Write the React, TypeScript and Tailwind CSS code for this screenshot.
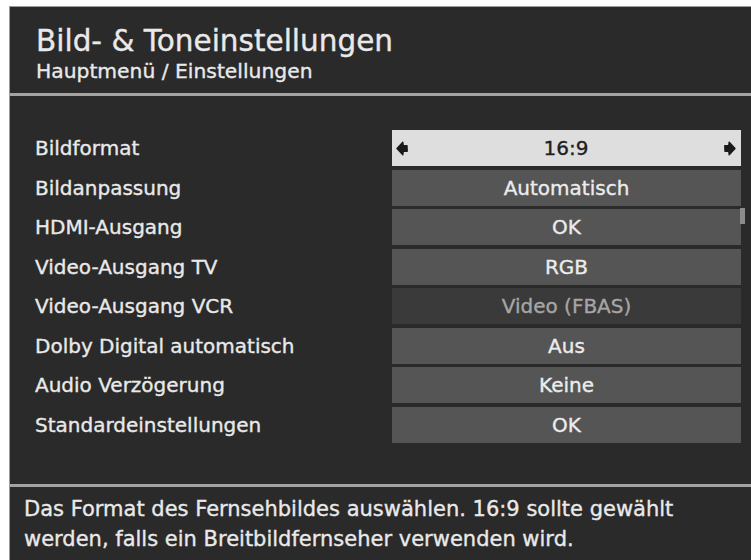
import React from "react";

const rows = [
  { label: "Bildformat", value: "16:9", state: "selected" },
  { label: "Bildanpassung", value: "Automatisch", state: "normal" },
  { label: "HDMI-Ausgang", value: "OK", state: "normal" },
  { label: "Video-Ausgang TV", value: "RGB", state: "normal" },
  { label: "Video-Ausgang VCR", value: "Video (FBAS)", state: "disabled" },
  { label: "Dolby Digital automatisch", value: "Aus", state: "normal" },
  { label: "Audio Verzögerung", value: "Keine", state: "normal" },
  { label: "Standardeinstellungen", value: "OK", state: "normal" },
];

function Arrow({ dir }: { dir: "left" | "right" }) {
  return (
    <svg
      width="12"
      height="15"
      viewBox="0 0 12 15"
      className={dir === "right" ? "rotate-180" : ""}
    >
      <path
        d="M1 7.5 L6.8 1.2 L7.2 4.6 L11 4.8 L11.2 10.2 L7.2 10.4 L6.8 13.8 Z"
        fill="#1a1a1a"
        stroke="#1a1a1a"
        strokeWidth="1.4"
        strokeLinejoin="round"
      />
    </svg>
  );
}

function ValueBox({ value, state }: { value: string; state: string }) {
  if (state === "selected") {
    return (
      <div className="flex h-[36px] items-center justify-between bg-[#dedede] pl-[4px] pr-[5px] text-[#1e1e1e]">
        <Arrow dir="left" />
        <span>{value}</span>
        <Arrow dir="right" />
      </div>
    );
  }
  const cls =
    state === "disabled"
      ? "bg-[#3a3a3a] text-[#a6a6a6]"
      : "bg-[#555555] text-[#ececec]";
  return (
    <div className={`flex h-[36px] items-center justify-center ${cls}`}>
      <span>{value}</span>
    </div>
  );
}

export default function App() {
  return (
    <div
      className="h-[560px] w-[751px] overflow-hidden bg-white pl-[9px] pt-[6px]"
      style={{ fontFamily: '"DejaVu Sans", sans-serif' }}
    >
      <div className="flex h-full flex-col border-l border-t border-[#9c9c9c] bg-[#2a2a2a] text-[#e9e9e9] [-webkit-text-stroke:0.35px]">
        <div className="pl-[26px] pt-[16px]">
          <h1 className="text-[29.5px] leading-[36px]">Bild- &amp; Toneinstellungen</h1>
          <div className="text-[20.3px] leading-[24px]">Hauptmenü / Einstellungen</div>
        </div>
        <div className="mt-[10px] h-[3px] bg-[#a3a3a3]" />

        <div className="relative mt-[34px] flex flex-col gap-[3.5px] pr-[10px]">
          {rows.map((r) => (
            <div key={r.label} className="flex items-center text-[20px]">
              <div className="w-[382px] pl-[25px]">{r.label}</div>
              <div className="flex-1">
                <ValueBox value={r.value} state={r.state} />
              </div>
            </div>
          ))}
          <div className="absolute right-[6px] top-[78px] h-[16px] w-[5px] bg-[#8c8c8c]" />
        </div>

        <div className="flex-1" />
        <div className="h-[3px] bg-[#a3a3a3]" />
        <div className="pb-[6px] pl-[14px] pt-[7px] text-[21px] leading-[30px]">
          <div>Das Format des Fernsehbildes auswählen. 16:9 sollte gewählt</div>
          <div>werden, falls ein Breitbildfernseher verwenden wird.</div>
        </div>
      </div>
    </div>
  );
}
